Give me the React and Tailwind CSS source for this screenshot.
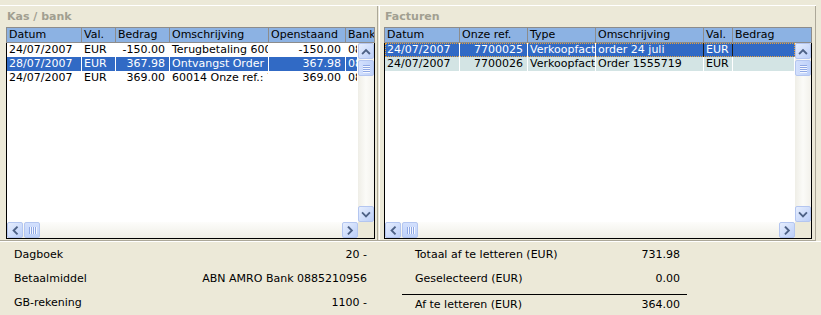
import React from "react";

const FONT = "font-['DejaVu_Sans',sans-serif]";

const PATHS = {
  up: "M4 9.5L7.5 6L11 9.5",
  down: "M4 6L7.5 9.5L11 6",
  left: "M9.5 4L6 7.5L9.5 11",
  right: "M6 4L9.5 7.5L6 11",
};

function Btn({ dir }) {
  return (
    <div className="w-[16px] h-[16px] shrink-0 rounded-[2px] border border-[#b4c6f0] bg-linear-to-br from-[#e6eefe] to-[#bccff8] flex items-center justify-center">
      <svg width="15" height="15" viewBox="0 0 15 15">
        <path d={PATHS[dir]} stroke="#4d6185" strokeWidth="2" fill="none" strokeLinecap="square" />
      </svg>
    </div>
  );
}

function Thumb({ vertical }) {
  const lines = [0, 1, 2, 3];
  return (
    <div
      className={
        vertical
          ? "w-[16px] h-[16px] shrink-0 mt-[1px] rounded-[2px] border border-[#b4c6f0] bg-linear-to-r from-[#d3e0fd] to-[#bed1f9] flex flex-col items-center justify-center gap-[1px]"
          : "w-[16px] h-[16px] shrink-0 ml-[1px] rounded-[2px] border border-[#b4c6f0] bg-linear-to-b from-[#d3e0fd] to-[#bed1f9] flex items-center justify-center gap-[1px]"
      }
    >
      {lines.map((i) => (
        <div
          key={i}
          className={
            vertical
              ? "w-[7px] h-[1px] bg-[#8fa8e4] shadow-[0_1px_0_#f4f7ff]"
              : "w-[1px] h-[7px] bg-[#8fa8e4] shadow-[1px_0_0_#f4f7ff]"
          }
        />
      ))}
    </div>
  );
}

function VScroll() {
  return (
    <div className="w-[16px] shrink-0 flex flex-col bg-linear-to-r from-[#efeee7] via-[#fbfbf8] to-[#f2f1eb]">
      <Btn dir="up" />
      <Thumb vertical />
      <div className="flex-1" />
      <Btn dir="down" />
    </div>
  );
}

function HScroll() {
  return (
    <div className="flex-1 min-w-0 h-[16px] flex bg-linear-to-b from-[#fdfdfb] to-[#efeee6]">
      <Btn dir="left" />
      <Thumb />
      <div className="flex-1" />
      <Btn dir="right" />
    </div>
  );
}

function Grid({ cols, rows, wClass }) {
  return (
    <div className={wClass}>
      <div className="flex h-[16px] border-t border-l border-[#8c8c8c] bg-[#8cb2e3] text-black">
        {cols.map((c) => (
          <div
            key={c.name}
            className={`${c.w} h-[15px] leading-[14px] border-r border-b border-[#8c8c8c] pl-[2px] overflow-hidden whitespace-nowrap`}
          >
            {c.name}
          </div>
        ))}
      </div>
      <div className="flex flex-col border-x border-b border-black bg-white">
        <div className="flex h-[179px]">
          <div className="flex-1 min-w-0 overflow-hidden">
            {rows.map((r, ri) => (
              <div key={ri} className={`flex h-[14px] leading-[14px] ${r.cls}`}>
                {r.cells.map((v, i) => (
                  <div
                    key={i}
                    className={`${cols[i].w} border-r overflow-hidden whitespace-nowrap ${
                      r.cellCls && r.cellCls[i] ? r.cellCls[i] : "border-white"
                    } ${cols[i].right ? "text-right pr-[4px]" : "pl-[2px]"}`}
                  >
                    {v}
                  </div>
                ))}
              </div>
            ))}
          </div>
          <VScroll />
        </div>
        <div className="flex h-[16px]">
          <HScroll />
          <div className="w-[16px] shrink-0 bg-[#ece9d8]" />
        </div>
      </div>
    </div>
  );
}

const leftCols = [
  { name: "Datum", w: "w-[75px] shrink-0" },
  { name: "Val.", w: "w-[34px] shrink-0" },
  { name: "Bedrag", w: "w-[54px] shrink-0", right: true },
  { name: "Omschrijving", w: "w-[99px] shrink-0" },
  { name: "Openstaand", w: "w-[77px] shrink-0", right: true },
  { name: "Bank", w: "flex-1 min-w-0" },
];

const leftRows = [
  {
    cls: "bg-white text-black",
    cells: ["24/07/2007", "EUR", "-150.00", "Terugbetaling 600014", "-150.00", "0885210956"],
  },
  {
    cls: "bg-[#316ac5] text-white",
    cells: ["28/07/2007", "EUR", "367.98", "Ontvangst Order 1555719", "367.98", "0885210956"],
  },
  {
    cls: "bg-white text-black",
    cells: ["24/07/2007", "EUR", "369.00", "60014 Onze ref.: 7700025", "369.00", "0885210956"],
  },
];

const rightCols = [
  { name: "Datum", w: "w-[75px] shrink-0" },
  { name: "Onze ref.", w: "w-[68px] shrink-0", right: true },
  { name: "Type", w: "w-[68px] shrink-0" },
  { name: "Omschrijving", w: "w-[108px] shrink-0" },
  { name: "Val.", w: "w-[29px] shrink-0" },
  { name: "Bedrag", w: "flex-1 min-w-0" },
];

const rightRows = [
  {
    cls: "bg-[#316ac5] text-white outline-1 outline-dotted -outline-offset-1 outline-[#e8a23a]",
    cells: ["24/07/2007", "7700025", "Verkoopfactuur", "order 24 juli", "EUR", ""],
    cellCls: [null, null, null, "border-[#1d1d1d]", "border-[#1d1d1d]", "border-[#316ac5]"],
  },
  {
    cls: "bg-[#d3e4e4] text-black",
    cells: ["24/07/2007", "7700026", "Verkoopfactuur", "Order 1555719", "EUR", ""],
  },
];

export default function App() {
  return (
    <div className={`${FONT} text-[11px] text-black w-[821px] h-[315px] bg-[#ece9d8] overflow-hidden`}>
      <div className="mt-[5px] w-[816px] flex border-t border-white border-b border-b-[#aca899]">
        <div className="w-[378px] shrink-0 border-r border-[#aca899] pl-[6px] pb-[1px]">
          <div className="h-[21px] pt-[4px] leading-[13px] pl-[1px] font-bold text-[#a19f91]">Kas / bank</div>
          <Grid cols={leftCols} rows={leftRows} wClass="w-[369px]" />
        </div>
        <div className="ml-[1px] w-[437px] shrink-0 border-l border-white border-r border-r-[#aca899] pl-[4px] pb-[1px]">
          <div className="h-[21px] pt-[4px] leading-[13px] pl-[1px] font-bold text-[#a19f91]">Facturen</div>
          <Grid cols={rightCols} rows={rightRows} wClass="w-[428px]" />
        </div>
      </div>
      <div className="border-t border-white pt-[1px] flex">
        <div className="w-[378px] shrink-0 pl-[14px] pr-[11px]">
          {[
            ["Dagboek", "20 -"],
            ["Betaalmiddel", "ABN AMRO Bank 0885210956"],
            ["GB-rekening", "1100 -"],
          ].map(([l, v]) => (
            <div key={l} className="flex justify-between h-[24px] leading-[24px] whitespace-nowrap">
              <span>{l}</span>
              <span>{v}</span>
            </div>
          ))}
        </div>
        <div className="ml-[24px] w-[285px] shrink-0">
          {[
            ["Totaal af te letteren (EUR)", "731.98"],
            ["Geselecteerd (EUR)", "0.00"],
          ].map(([l, v]) => (
            <div key={l} className="flex justify-between h-[24px] leading-[24px] pl-[13px] pr-[7px] whitespace-nowrap">
              <span>{l}</span>
              <span>{v}</span>
            </div>
          ))}
          <div className="mt-[3px] border-t border-black" />
          <div className="flex justify-between h-[20px] leading-[20px] pl-[13px] pr-[7px] whitespace-nowrap">
            <span>Af te letteren (EUR)</span>
            <span>364.00</span>
          </div>
        </div>
      </div>
    </div>
  );
}
